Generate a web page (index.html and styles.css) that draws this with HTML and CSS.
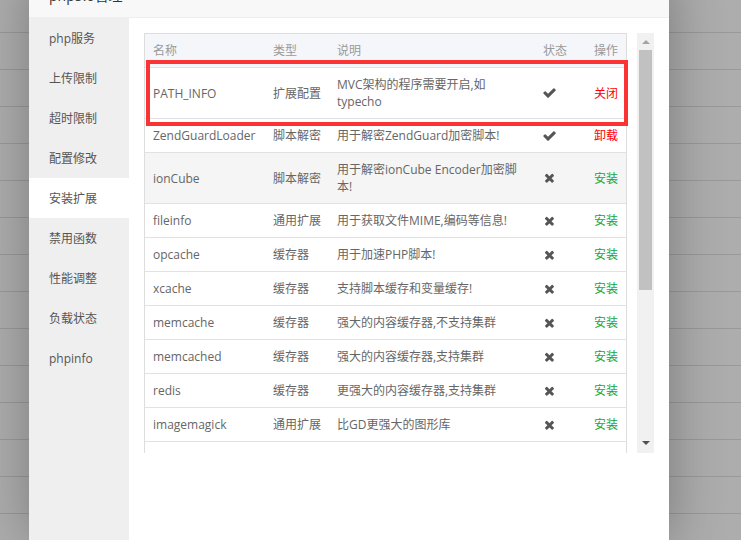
FILE: index.html
```html
<!DOCTYPE html>
<html lang="zh-CN">
<head>
<meta charset="utf-8">
<title>php5.6管理</title>
<link rel="stylesheet" href="styles.css">
</head>
<body>
<div class="backdrop">
  <div class="modal">
    <div class="modal-title">php5.6管理</div>
    <div class="modal-body">
      <ul class="sidebar">
        <li>php服务</li>
        <li>上传限制</li>
        <li>超时限制</li>
        <li>配置修改</li>
        <li class="active">安装扩展</li>
        <li>禁用函数</li>
        <li>性能调整</li>
        <li>负载状态</li>
        <li>phpinfo</li>
      </ul>
      <div class="content">
        <div class="panel">
          <div class="table-box">
            <table class="ext-table">
              <colgroup>
                <col class="c-name"><col class="c-type"><col class="c-desc"><col class="c-status"><col class="c-op">
              </colgroup>
              <thead>
                <tr><th>名称</th><th>类型</th><th>说明</th><th>状态</th><th class="op">操作</th></tr>
              </thead>
              <tbody>
                <tr>
                  <td>PATH_INFO</td><td>扩展配置</td><td>MVC架构的程序需要开启,如typecho</td>
                  <td><svg class="ico-check" viewBox="110 300 1570 1240"><path d="M1671 566q0 40-28 68l-724 724-136 136q-28 28-68 28t-68-28l-136-136-362-362q-28-28-28-68t28-68l136-136q28-28 68-28t68 28l294 295 656-657q28-28 68-28t68 28l136 136q28 28 28 68z"/></svg></td>
                  <td class="op"><span class="red">关闭</span></td>
                </tr>
                <tr>
                  <td>ZendGuardLoader</td><td>脚本解密</td><td>用于解密ZendGuard加密脚本!</td>
                  <td><svg class="ico-check" viewBox="110 300 1570 1240"><path d="M1671 566q0 40-28 68l-724 724-136 136q-28 28-68 28t-68-28l-136-136-362-362q-28-28-28-68t28-68l136-136q28-28 68-28t68 28l294 295 656-657q28-28 68-28t68 28l136 136q28 28 28 68z"/></svg></td>
                  <td class="op"><span class="red">卸载</span></td>
                </tr>
                <tr class="hover">
                  <td>ionCube</td><td>脚本解密</td><td>用于解密ionCube Encoder加密脚本!</td>
                  <td><svg class="ico-x" viewBox="170 250 1330 1330"><path d="M1490 1322q0 40-28 68l-136 136q-28 28-68 28t-68-28l-294-294-294 294q-28 28-68 28t-68-28l-136-136q-28-28-28-68t28-68l294-294-294-294q-28-28-28-68t28-68l136-136q28-28 68-28t68 28l294 294 294-294q28-28 68-28t68 28l136 136q28 28 28 68t-28 68l-294 294 294 294q28 28 28 68z"/></svg></td>
                  <td class="op"><span class="green">安装</span></td>
                </tr>
                <tr>
                  <td>fileinfo</td><td>通用扩展</td><td>用于获取文件MIME,编码等信息!</td>
                  <td><svg class="ico-x" viewBox="170 250 1330 1330"><path d="M1490 1322q0 40-28 68l-136 136q-28 28-68 28t-68-28l-294-294-294 294q-28 28-68 28t-68-28l-136-136q-28-28-28-68t28-68l294-294-294-294q-28-28-28-68t28-68l136-136q28-28 68-28t68 28l294 294 294-294q28-28 68-28t68 28l136 136q28 28 28 68t-28 68l-294 294 294 294q28 28 28 68z"/></svg></td>
                  <td class="op"><span class="green">安装</span></td>
                </tr>
                <tr>
                  <td>opcache</td><td>缓存器</td><td>用于加速PHP脚本!</td>
                  <td><svg class="ico-x" viewBox="170 250 1330 1330"><path d="M1490 1322q0 40-28 68l-136 136q-28 28-68 28t-68-28l-294-294-294 294q-28 28-68 28t-68-28l-136-136q-28-28-28-68t28-68l294-294-294-294q-28-28-28-68t28-68l136-136q28-28 68-28t68 28l294 294 294-294q28-28 68-28t68 28l136 136q28 28 28 68t-28 68l-294 294 294 294q28 28 28 68z"/></svg></td>
                  <td class="op"><span class="green">安装</span></td>
                </tr>
                <tr>
                  <td>xcache</td><td>缓存器</td><td>支持脚本缓存和变量缓存!</td>
                  <td><svg class="ico-x" viewBox="170 250 1330 1330"><path d="M1490 1322q0 40-28 68l-136 136q-28 28-68 28t-68-28l-294-294-294 294q-28 28-68 28t-68-28l-136-136q-28-28-28-68t28-68l294-294-294-294q-28-28-28-68t28-68l136-136q28-28 68-28t68 28l294 294 294-294q28-28 68-28t68 28l136 136q28 28 28 68t-28 68l-294 294 294 294q28 28 28 68z"/></svg></td>
                  <td class="op"><span class="green">安装</span></td>
                </tr>
                <tr>
                  <td>memcache</td><td>缓存器</td><td>强大的内容缓存器,不支持集群</td>
                  <td><svg class="ico-x" viewBox="170 250 1330 1330"><path d="M1490 1322q0 40-28 68l-136 136q-28 28-68 28t-68-28l-294-294-294 294q-28 28-68 28t-68-28l-136-136q-28-28-28-68t28-68l294-294-294-294q-28-28-28-68t28-68l136-136q28-28 68-28t68 28l294 294 294-294q28-28 68-28t68 28l136 136q28 28 28 68t-28 68l-294 294 294 294q28 28 28 68z"/></svg></td>
                  <td class="op"><span class="green">安装</span></td>
                </tr>
                <tr>
                  <td>memcached</td><td>缓存器</td><td>强大的内容缓存器,支持集群</td>
                  <td><svg class="ico-x" viewBox="170 250 1330 1330"><path d="M1490 1322q0 40-28 68l-136 136q-28 28-68 28t-68-28l-294-294-294 294q-28 28-68 28t-68-28l-136-136q-28-28-28-68t28-68l294-294-294-294q-28-28-28-68t28-68l136-136q28-28 68-28t68 28l294 294 294-294q28-28 68-28t68 28l136 136q28 28 28 68t-28 68l-294 294 294 294q28 28 28 68z"/></svg></td>
                  <td class="op"><span class="green">安装</span></td>
                </tr>
                <tr>
                  <td>redis</td><td>缓存器</td><td>更强大的内容缓存器,支持集群</td>
                  <td><svg class="ico-x" viewBox="170 250 1330 1330"><path d="M1490 1322q0 40-28 68l-136 136q-28 28-68 28t-68-28l-294-294-294 294q-28 28-68 28t-68-28l-136-136q-28-28-28-68t28-68l294-294-294-294q-28-28-28-68t28-68l136-136q28-28 68-28t68 28l294 294 294-294q28-28 68-28t68 28l136 136q28 28 28 68t-28 68l-294 294 294 294q28 28 28 68z"/></svg></td>
                  <td class="op"><span class="green">安装</span></td>
                </tr>
                <tr>
                  <td>imagemagick</td><td>通用扩展</td><td>比GD更强大的图形库</td>
                  <td><svg class="ico-x" viewBox="170 250 1330 1330"><path d="M1490 1322q0 40-28 68l-136 136q-28 28-68 28t-68-28l-294-294-294 294q-28 28-68 28t-68-28l-136-136q-28-28-28-68t28-68l294-294-294-294q-28-28-28-68t28-68l136-136q28-28 68-28t68 28l294 294 294-294q28-28 68-28t68 28l136 136q28 28 28 68t-28 68l-294 294 294 294q28 28 28 68z"/></svg></td>
                  <td class="op"><span class="green">安装</span></td>
                </tr>
              </tbody>
            </table>
          </div>
          <div class="scrollbar">
            <span class="arrow-up"></span>
            <span class="thumb"></span>
            <span class="arrow-down"></span>
          </div>
          <div class="highlight"></div>
        </div>
      </div>
    </div>
  </div>
</div>
</body>
</html>
```

FILE: styles.css
```css
* { box-sizing: border-box; }
html, body { margin: 0; padding: 0; }
body {
  width: 741px;
  height: 540px;
  overflow: hidden;
  font-family: "Open Sans", "Noto Sans CJK SC", sans-serif;
  font-size: 12px;
}
.backdrop {
  position: relative;
  width: 741px;
  height: 540px;
  background-color: #adadad;
  background-image: repeating-linear-gradient(to bottom, transparent 0, transparent 32px, #999 32px, #999 33px, transparent 33px, transparent 37px);
}
.modal {
  position: absolute;
  left: 29px;
  top: -25px;
  width: 640px;
  height: 565px;
  background: #fff;
  box-shadow: 1px 1px 50px rgba(0, 0, 0, 0.3);
  display: flex;
  flex-direction: column;
}
.modal-title {
  height: 43px;
  line-height: 42px;
  padding-left: 20px;
  font-size: 14px;
  color: #333;
  background: #f8f8f8;
  border-bottom: 1px solid #eee;
}
.modal-body {
  flex: 1;
  display: flex;
}
.sidebar {
  list-style: none;
  margin: 0;
  padding: 0;
  width: 100px;
  background: #efefef;
}
.sidebar li {
  height: 40px;
  line-height: 40px;
  padding: 1px 0 0 20px;
  color: #555;
}
.sidebar li.active { background: #fff; }
.content {
  flex: 1;
  padding: 15px;
}
.panel {
  position: relative;
  display: flex;
  gap: 10px;
  height: 420px;
}
.table-box {
  width: 483px;
  height: 420px;
  overflow: hidden;
  border: 1px solid #ddd;
  border-bottom: none;
}
.ext-table {
  width: 481px;
  table-layout: fixed;
  border-collapse: collapse;
  color: #666;
}
.c-name { width: 120px; }
.c-type { width: 64px; }
.c-desc { width: 206px; }
.c-status { width: 49px; }
.c-op { width: 42px; }
.ext-table th,
.ext-table td {
  padding: 8px;
  line-height: 17px;
  text-align: left;
  vertical-align: middle;
  border-bottom: 1px solid #e2e2e2;
  font-weight: normal;
}
.ext-table thead tr { background: #f5f6fa; }
.ext-table th { color: #999; }
.ext-table .op { text-align: right; }
.ext-table tr.hover { background: #f5f5f5; }
.red { color: #f00; }
.green { color: #20a53a; }
.ico-check, .ico-x { display: block; fill: #555; }
.ico-check { width: 13px; height: 10px; }
.ico-x { width: 10px; height: 10px; margin-left: 1px; }
.scrollbar {
  width: 17px;
  height: 420px;
  background: #f1f1f1;
  display: flex;
  flex-direction: column;
  align-items: center;
}
.arrow-up {
  margin-top: 7px;
  width: 0;
  height: 0;
  border-left: 4px solid transparent;
  border-right: 4px solid transparent;
  border-bottom: 4px solid #a3a3a3;
}
.thumb {
  margin-top: 6px;
  width: 13px;
  height: 240px;
  background: #c1c1c1;
}
.arrow-down {
  margin-top: auto;
  margin-bottom: 8px;
  width: 0;
  height: 0;
  border-left: 4px solid transparent;
  border-right: 4px solid transparent;
  border-top: 4px solid #505050;
}
.highlight {
  position: absolute;
  left: 2px;
  top: 27px;
  width: 482px;
  height: 66px;
  border: 4px solid #fa3434;
}
```
